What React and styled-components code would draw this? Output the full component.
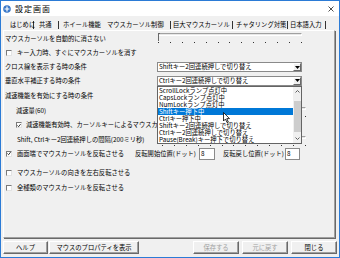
import React from "react";
import styled, { createGlobalStyle } from "styled-components";

const GlobalStyle = createGlobalStyle`
  html, body {
    margin: 0;
    padding: 0;
    background: #f0f0f0;
  }
  body {
    font-family: "Noto Sans CJK JP", "Noto Sans", sans-serif;
    font-size: 6.3px;
    color: #000;
  }
  * {
    box-sizing: border-box;
  }
`;

const Window = styled.div`
  width: 340px;
  height: 258px;
  border: 1px solid #2b7bd6;
  background: #f0f0f0;
  display: flex;
  flex-direction: column;
  overflow: hidden;
`;

const TitleBar = styled.div`
  height: 15px;
  flex: none;
  background: #fff;
  display: flex;
  align-items: center;
  gap: 4px;
  padding: 0 5px 0 2px;
`;

const Title = styled.span`
  flex: 1;
  font-size: 8px;
  letter-spacing: 1px;
`;

const TabRow = styled.div`
  height: 14px;
  flex: none;
  display: flex;
  align-items: center;
  padding: 3px 0 0 9px;
  white-space: nowrap;
`;

const Tab = styled.span`
  flex: none;
  width: ${(p) => p.$w}px;
  padding-left: ${(p) => p.$pl}px;
  line-height: 8px;
  border-right: 1px solid ${(p) => (p.$sep ? "#333" : "transparent")};
`;

const Panel = styled.div`
  position: relative;
  height: 208px;
  flex: none;
  margin: 0 4px 0 2px;
  border: 1px solid;
  border-color: #fff #a0a0a0 #a0a0a0 #fff;
  box-shadow: 1px 1px 0 #696969;
  display: flex;
  flex-direction: column;
`;

const Row = styled.div`
  position: relative;
  z-index: ${(p) => (p.$front ? 2 : "auto")};
  display: flex;
  align-items: center;
  flex: none;
  height: ${(p) => p.$h}px;
  margin-top: ${(p) => p.$mt || 0}px;
  padding-left: ${(p) => p.$indent || 0}px;
  white-space: nowrap;
`;

const Label = styled.span`
  flex: none;
  width: ${(p) => (p.$w ? `${p.$w}px` : "auto")};
  overflow: hidden;
  line-height: 8px;
`;

const Box = styled.span`
  flex: none;
  width: 6px;
  height: 6px;
  margin-right: ${(p) => p.$gap}px;
  background: #fff;
  border: 1px solid;
  border-color: #7a7a7a #e3e3e3 #e3e3e3 #7a7a7a;
  display: flex;
  align-items: center;
  justify-content: center;
`;

const Combo = styled.div`
  position: relative;
  flex: none;
  width: 145px;
  height: 10px;
  background: #fff;
  border: 1px solid #8a8a8a;
  display: flex;
  align-items: center;
`;

const ComboText = styled.span`
  flex: 1;
  padding-left: 1px;
  line-height: 8px;
  overflow: hidden;
`;

const ComboButton = styled.span`
  flex: none;
  width: 8px;
  height: 8px;
  background: #f0f0f0;
  border: 1px solid;
  border-color: #fff #696969 #696969 #fff;
  display: flex;
  align-items: center;
  justify-content: center;
`;

const DropList = styled.div`
  position: absolute;
  z-index: 2;
  left: -1px;
  top: 9px;
  width: 145px;
  height: 58px;
  background: #fff;
  border: 1px solid #646464;
  display: flex;
`;

const Items = styled.div`
  flex: 1;
  display: flex;
  flex-direction: column;
  overflow: hidden;
`;

const Item = styled.div`
  flex: none;
  height: 7px;
  line-height: 7px;
  padding-left: 1px;
  overflow: hidden;
  background: ${(p) => (p.$sel ? "#0078d7" : "transparent")};
  color: ${(p) => (p.$sel ? "#fff" : "#000")};
`;

const ScrollBar = styled.div`
  flex: none;
  width: 8px;
  background: #f0f0f0;
  display: flex;
  flex-direction: column;
  align-items: center;
`;

const ScrollArrow = styled.span`
  flex: none;
  height: 9px;
  display: flex;
  align-items: center;
`;

const ScrollThumb = styled.span`
  width: 7px;
  height: 31px;
  margin-top: 5px;
  background: #cdcdcd;
`;

const ScrollFill = styled.span`
  flex: 1;
`;

const Pointer = styled.svg`
  position: absolute;
  left: 65px;
  top: 25px;
`;

const Slider = styled.div`
  position: relative;
  flex: none;
  align-self: flex-start;
  width: 144px;
  height: 13px;
  padding-top: 2px;
`;

const Track = styled.div`
  height: 3px;
  background: #e7e7e7;
  border: 1px solid;
  border-color: #a0a0a0 #fff #fff #a0a0a0;
`;

const Ticks = styled.div`
  display: flex;
  justify-content: space-between;
  margin-top: 6px;
`;

const Tick = styled.span`
  width: 1px;
  height: 1px;
  background: #333;
`;

const Thumb = styled.span`
  position: absolute;
  left: 0;
  top: 2px;
  width: 2px;
  height: 8px;
  border-left: 1px solid #696969;
  border-top: 1px solid #696969;
`;

const NumInput = styled.span`
  flex: none;
  width: ${(p) => p.$w}px;
  height: 12px;
  margin-right: ${(p) => p.$mr || 0}px;
  background: #fff;
  border: 1px solid #8a8a8a;
  padding-left: 1px;
  line-height: 10px;
`;

const Footer = styled.div`
  display: flex;
  gap: 1px;
  padding: 3px 2px 0 2px;
`;

const RightGroup = styled.div`
  margin-left: auto;
  display: flex;
  gap: 3px;
`;

const Button = styled.button`
  width: ${(p) => p.$w}px;
  height: 13px;
  padding: 0;
  font: inherit;
  background: #f0f0f0;
  color: ${(p) => (p.disabled ? "#a0a0a0" : "#000")};
  border: 1px solid;
  border-color: #fff #696969 #696969 #fff;
  box-shadow: inset -1px -1px 0 #a0a0a0;
`;

const tabs = [
  { label: "はじめに", w: 24, pl: 0, sep: true },
  { label: "共通", w: 25, pl: 5, sep: true },
  { label: "ホイール機能", w: 46, pl: 4, sep: false },
  { label: "マウスカーソル制御", w: 66, pl: 2, sep: true },
  { label: "巨大マウスカーソル", w: 62, pl: 2, sep: true },
  { label: "チャタリング対策", w: 55, pl: 3, sep: true },
  { label: "日本語入力", w: 38, pl: 2, sep: true },
];

const options = [
  "ScrollLockランプ点灯中",
  "CapsLockランプ点灯中",
  "NumLockランプ点灯中",
  "Shiftキー押下中",
  "Ctrlキー押下中",
  "Shiftキー2回連続押しで切り替え",
  "Ctrlキー2回連続押しで切り替え",
  "Pause(Break)キー押下で切り替え",
];

function Check({ checked, gap = 5 }) {
  return (
    <Box $gap={gap}>
      {checked && (
        <svg width="5" height="5" viewBox="0 0 5 5">
          <path d="M0.5 2.5 L2 4 L4.5 0.8" stroke="#000" strokeWidth="1" fill="none" />
        </svg>
      )}
    </Box>
  );
}

function TrackBar() {
  return (
    <Slider>
      <Track />
      <Thumb />
      <Ticks>
        {Array.from({ length: 13 }).map((_, i) => (
          <Tick key={i} />
        ))}
      </Ticks>
    </Slider>
  );
}

function Arrow() {
  return (
    <svg width="5" height="3" viewBox="0 0 5 3">
      <path d="M0 0 H5 L2.5 3 Z" fill="#000" />
    </svg>
  );
}

function Select({ value, open }) {
  return (
    <Combo>
      <ComboText>{value}</ComboText>
      <ComboButton>
        <Arrow />
      </ComboButton>
      {open && (
        <DropList>
          <Items>
            {options.map((o) => (
              <Item key={o} $sel={o === "Shiftキー押下中"}>
                {o}
              </Item>
            ))}
          </Items>
          <ScrollBar>
            <ScrollArrow>
              <svg width="5" height="3" viewBox="0 0 5 3">
                <path d="M0.5 2.5 L2.5 0.5 L4.5 2.5" stroke="#606060" fill="none" />
              </svg>
            </ScrollArrow>
            <ScrollThumb />
            <ScrollFill />
            <ScrollArrow>
              <svg width="5" height="3" viewBox="0 0 5 3">
                <path d="M0.5 0.5 L2.5 2.5 L4.5 0.5" stroke="#606060" fill="none" />
              </svg>
            </ScrollArrow>
          </ScrollBar>
          <Pointer width="7" height="11" viewBox="0 0 7 11">
            <path d="M0.5 0.5 V9 L2.5 7 L4 10.5 L5.3 10 L3.8 6.6 L6.5 6.6 Z" fill="#fff" stroke="#000" strokeWidth="0.8" />
          </Pointer>
        </DropList>
      )}
    </Combo>
  );
}

export default function App() {
  return (
    <>
      <GlobalStyle />
      <Window>
        <TitleBar>
          <svg width="8" height="8" viewBox="0 0 8 8">
            <circle cx="4" cy="4" r="3.8" fill="#3a78c8" />
            <path d="M4 1.6 V6.4 M1.6 4 H6.4" stroke="#fff" strokeWidth="1.2" />
          </svg>
          <Title>設定画面</Title>
          <svg width="6" height="6" viewBox="0 0 6 6">
            <path d="M0.5 0.5 L5.5 5.5 M5.5 0.5 L0.5 5.5" stroke="#222" strokeWidth="0.8" />
          </svg>
        </TitleBar>

        <TabRow>
          {tabs.map((t) => (
            <Tab key={t.label} $w={t.w} $pl={t.pl} $sep={t.sep}>
              {t.label}
            </Tab>
          ))}
        </TabRow>

        <Panel>
          <Row $h={15} $indent={1}>
            <Label $w={153}>マウスカーソルを自動的に消さない</Label>
            <TrackBar />
          </Row>
          <Row $h={14} $indent={2}>
            <Check />
            <Label>キー入力時、すぐにマウスカーソルを消す</Label>
          </Row>
          <Row $h={14} $indent={1}>
            <Label $w={152}>クロス線を表示する時の条件</Label>
            <Select value="Shiftキー2回連続押しで切り替え" />
          </Row>
          <Row $h={13} $indent={1} $front>
            <Label $w={152}>垂直水平補正する時の条件</Label>
            <Select value="Ctrlキー2回連続押しで切り替え" open />
          </Row>
          <Row $h={18} $indent={1}>
            <Label $w={152}>減速機能を有効にする時の条件</Label>
          </Row>
          <Row $h={11} $indent={12}>
            <Label $w={146}>減速量(60)</Label>
            <TrackBar />
          </Row>
          <Row $h={18} $indent={12}>
            <Check checked gap={4} />
            <Label $w={131}>減速機能有効時、カーソルキーによるマウスカーソル移動を減速させる</Label>
          </Row>
          <Row $h={12} $indent={13}>
            <Label $w={145}>Shift, Ctrlキー2回連続押しの間隔(200ミリ秒)</Label>
            <TrackBar />
          </Row>
          <Row $h={15} $indent={2}>
            <Check checked />
            <Label $w={118}>画面端でマウスカーソルを反転させる</Label>
            <Label $w={64}>反転開始位置(ドット)</Label>
            <NumInput $w={16} $mr={8}>8</NumInput>
            <Label $w={62}>反転戻し位置(ドット)</Label>
            <NumInput $w={15}>8</NumInput>
          </Row>
          <Row $h={15} $mt={4} $indent={2}>
            <Check />
            <Label>マウスカーソルの向きを左右反転させる</Label>
          </Row>
          <Row $h={15} $indent={2}>
            <Check />
            <Label>全種類のマウスカーソルを反転させる</Label>
          </Row>
        </Panel>

        <Footer>
          <Button $w={45}>ヘルプ</Button>
          <Button $w={90}>マウスのプロパティを表示</Button>
          <RightGroup>
            <Button $w={46} disabled>
              保存する
            </Button>
            <Button $w={46} disabled>
              元に戻す
            </Button>
            <Button $w={46}>閉じる</Button>
          </RightGroup>
        </Footer>
      </Window>
    </>
  );
}
